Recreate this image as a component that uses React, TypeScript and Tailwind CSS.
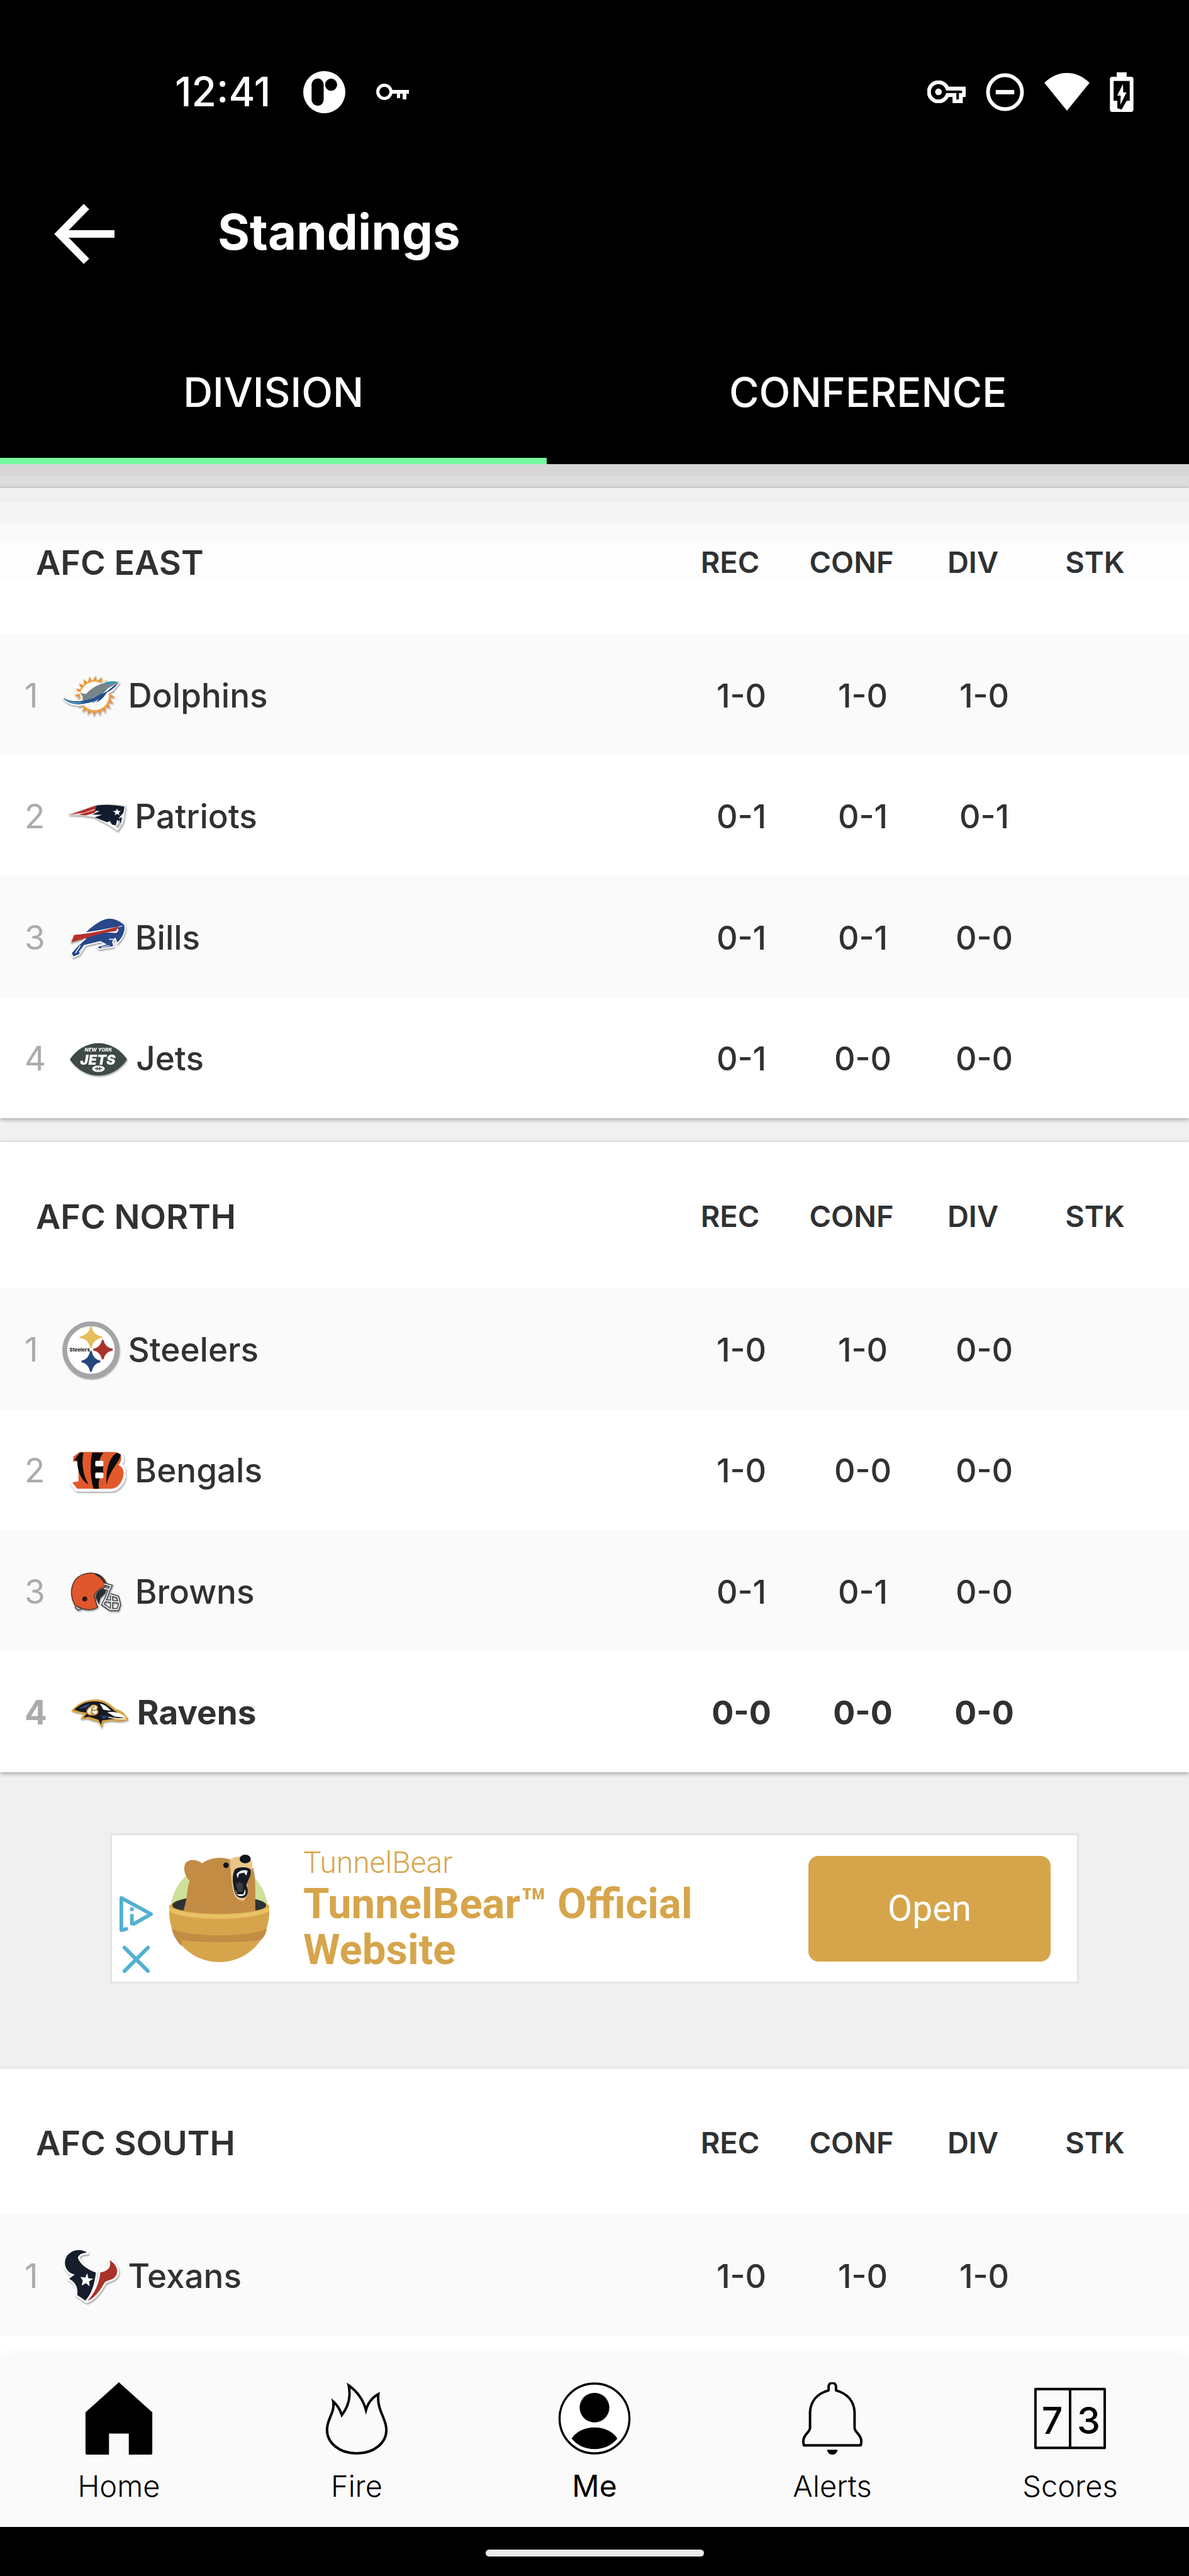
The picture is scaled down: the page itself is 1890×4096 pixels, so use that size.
import type { ReactNode } from "react";

type Team = { rank: number; name: string; logo: ReactNode; stats: string[]; bold?: boolean };
type Division = { title: string; teams: Team[] };

function Logo({ label, children }: { label: string; children: ReactNode }) {
  return (
    <svg
      viewBox="0 0 92 92"
      role="img"
      aria-label={label}
      className="h-[91px] w-[91px] shrink-0 drop-shadow-[1px_2px_1px_rgba(0,0,0,0.35)]"
    >
      {children}
    </svg>
  );
}

const rays = Array.from({ length: 20 }, (_, i) => {
  const at = (deg: number, r: number) => {
    const a = (deg * Math.PI) / 180;
    return `${(52 + r * Math.cos(a)).toFixed(1)} ${(46 + r * Math.sin(a)).toFixed(1)}`;
  };
  return `M${at(i * 18 - 6, 25)}L${at(i * 18 + 3, 32)}L${at(i * 18 + 6, 25)}Z`;
}).join("");

const dolphins = (
  <Logo label="Dolphins logo">
    <path d={rays} fill="#ee7d2b" stroke="#f6b765" strokeWidth="1" />
    <circle cx="52" cy="46" r="24" fill="#fff" stroke="#f0a445" strokeWidth="2.5" />
    <path d="M91 24C84 22 75 23 68 25C56 28 45 35 38 43L28 41C32 45 34 48 32 52C26 56 14 56 1 49C8 59 22 63 38 59C52 58 62 52 70 42C80 40 86 32 91 24Z" fill="#fff" stroke="#fff" strokeWidth="3" />
    <path d="M91 24C84 22 75 23 68 25C56 28 45 35 38 43L28 41C32 45 34 48 32 52C36 54 46 52 53 47L48 58C58 54 64 46 70 38C78 34 85 30 91 24Z" fill="#77858b" />
    <path d="M68 25C75 22 83 22 90 24L76 27Z" fill="#2d9ac2" />
    <path d="M1 49C12 55 24 56 34 53C48 52 62 44 72 36C64 48 52 57 38 58C22 62 8 58 1 49Z" fill="#26548f" />
    <path d="M90 26C84 33 77 38 71 41C67 49 61 53 55 57C59 49 64 41 72 35Z" fill="#1f4688" />
    <path d="M5 52C14 57 26 58 36 55C28 60 13 59 5 52Z" fill="#61b8d3" />
    <path d="M87 26L73 34L64 43L73 38Z" fill="#fff" />
  </Logo>
);

const patriots = (
  <Logo label="Patriots logo">
    <path d="M0 42L44 27C60 24 78 26 92 28L90 40L88 54L79 68L62 57L42 46L22 43Z" fill="#fff" stroke="#d5d5d5" strokeWidth="1.5" />
    <path d="M2 42L44 27L45 32L24 39Z" fill="#b5302f" />
    <path d="M16 42L46 33L42 39L28 43Z" fill="#b5302f" />
    <path d="M45 27C60 25 76 26 90 29L88 39L80 48L86 46L84 56L78 50L76 59L70 58L66 52L62 54L42 46L54 42L38 42L50 36L42 36Z" fill="#121b2b" />
    <path d="M78 32L79.5 36L84 36L80.5 39L82 43L78 40.500L74 43L75.500 39L71 36L76 36Z" fill="#fff" />
    <path d="M82 49L84 58L79 64L75 60L79 58Z" fill="#aeb4b8" />
  </Logo>
);

const bills = (
  <Logo label="Bills logo">
    <path d="M20 42C34 28 48 16 62 14C72 13 82 18 89 24C92 34 87 46 77 55L74 47L70 52L72 60L48 64L44 60L58 56L50 52C42 54 32 56 26 58L16 73L6 77L3 70L14 58L26 47Z" fill="#27478a" stroke="#fff" strokeWidth="2" />
    <path d="M1 54L8 39C30 37 56 32 86 26L76 38L54 37L28 45Z" fill="#fff" />
    <path d="M3 53L8 41C32 39 56 34 80 27L75 35L54 38L28 46Z" fill="#b7312c" />
    <path d="M78 29L86 27L79 34Z" fill="#27478a" />
    <path d="M18 58L10 70M25 57L16 69" stroke="#fff" strokeWidth="1.500" fill="none" />
    <path d="M52 61L65 58M64 48L74 48" stroke="#fff" strokeWidth="1.500" />
  </Logo>
);

const jets = (
  <Logo label="Jets logo">
    <path d="M0 46C12 28 30 20 46 20S80 28 92 46C80 64 62 72 46 72S12 64 0 46Z" fill="#3e4a45" />
    <g fill="#fff" fontFamily="Inter, sans-serif" fontStyle="italic" textAnchor="middle">
      <text x="46" y="33" fontSize="8" fontWeight="800">NEW YORK</text>
      <text x="45" y="55" fontSize="22" fontWeight="900">JETS</text>
    </g>
    <ellipse cx="46" cy="61" rx="11" ry="6" fill="#fff" stroke="#3e4a45" strokeWidth="1.500" />
    <path d="M40 61H52M44 58V64M48 58V64" stroke="#3e4a45" strokeWidth="1.500" />
  </Logo>
);

const steelers = (
  <Logo label="Steelers logo">
    <circle cx="46" cy="46" r="42" fill="#fff" stroke="#a3a5a7" strokeWidth="7.500" />
    <path d="M46 8Q48.500 23 64 25.500Q48.500 28 46 43Q43.500 28 28 25.500Q43.500 23 46 8Z" fill="#e7bd5c" stroke="#e7bd5c" strokeWidth="2" />
    <path d="M65 30Q67.500 43 81 45.500Q67.500 48 65 61Q62.500 48 50 45.500Q62.500 43 65 30Z" fill="#a83129" stroke="#a83129" strokeWidth="2.500" />
    <path d="M46 48Q48.500 62 61 64.500Q48.500 67 46 81Q43.500 67 31 64.500Q43.500 62 46 48Z" fill="#26467f" stroke="#26467f" strokeWidth="2.500" />
    <text x="28" y="49" fontSize="8" fontWeight="800" fontFamily="Inter, sans-serif" textAnchor="middle" fill="#222">Steelers</text>
  </Logo>
);

const bengalsB = "M8 22L18 15H72C86 15 88 28 80 36C91 40 90 54 84 64C80 70 75 74 68 74H14L6 64L16 62V30H7Z";
const bengals = (
  <Logo label="Bengals logo">
    <path d={bengalsB} fill="#fff" stroke="#fff" strokeWidth="9" strokeLinejoin="round" />
    <path d={bengalsB} fill="#e2582b" />
    <path d="M4 32H14V60L4 64Z" fill="#fff" />
    <path d="M9 28L18 16H24C20 34 24 54 32 67C20 60 14 46 14 29Z" fill="#0a0a0a" />
    <path d="M38 16H56C52 22 50 26 50 30H43V38H56C55 42 55 44 56 48H43V57H50C48 62 48 68 49 74H40C35 56 34 34 38 16Z" fill="#0a0a0a" />
    <path d="M84 19C82 32 68 40 61 67C60 46 64 24 78 16Z" fill="#0a0a0a" />
    <rect x="43" y="29" width="13" height="9" rx="2" fill="#fff" />
    <rect x="43" y="48" width="13" height="9" rx="2" fill="#fff" />
  </Logo>
);

const mask = "M56 33L67 36L64 42L56 40M64 42L60 54L54 66L66 74L78 74L81 66L78 54L66 50M58 60L80 62M68 52L68 73";
const browns = (
  <Logo label="Browns logo">
    <path d="M10 68C0 52 2 32 14 22C28 12 46 14 54 23C58 27 60 31 61 36C52 38 45 42 40 52C43 58 42 64 46 70C38 76 26 75 20 72Z" fill="#e1562c" stroke="#45332c" strokeWidth="1.500" />
    <path d="M42 17C50 20 55 26 58 34" stroke="#272b2e" strokeWidth="2.500" fill="none" />
    <path d="M42 54C44 45 50 40 60 39L58 48L50 56L48 66Z" fill="#2a2c31" />
    <circle cx="25" cy="57" r="4" fill="#2a1a14" />
    <path d="M9 70L14 75L20 73" stroke="#555" strokeWidth="2" fill="none" />
    <path d={mask} fill="none" stroke="#3e4245" strokeWidth="5" />
    <path d={mask} fill="none" stroke="#e9eaea" strokeWidth="2" />
  </Logo>
);

const ravens = (
  <Logo label="Ravens logo">
    <path d="M0 42C12 28 28 22 46 24C58 26 66 34 72 39C80 41 88 46 92 56C82 60 72 59 64 58L52 60L49 70L44 60L24 54L15 56L20 46L10 45Z" fill="#d9a240" />
    <path d="M5 40C16 29 30 25 44 27C56 28 64 37 70 42L88 52L66 55L50 57L48 64L44 56L28 51L20 53L26 45L14 43Z" fill="#17191d" />
    <path d="M28 38C24 42 25 46 30 48H38C44 46 44 42 40 40C44 36 42 32 34 33Z" fill="#fff" stroke="#d9a240" strokeWidth="2" />
    <path d="M34 36L32 46M35 36H38M34 41H39M33 46H37" stroke="#a87621" strokeWidth="2" />
    <path d="M46 30C54 32 60 36 64 42L52 40Z" fill="#fff" />
    <path d="M58 44C72 42 82 46 89 53L70 51Z" fill="#fff" />
    <path d="M60 52C70 54 80 55 88 55" stroke="#fff" strokeWidth="1.500" fill="none" />
    <path d="M12 39C22 32 28 31 32 30L24 37Z" fill="#2a4b8a" />
    <path d="M47 49L62 50L52 55Z" fill="#27406f" />
  </Logo>
);

const texansNavy = "M40 8C32 2 20 3 13 8C5 13 3 22 5 30C8 38 14 42 20 43L11 50C21 55 26 64 24 76L37 85C46 76 52 60 54 40C42 36 28 27 25 16C27 10 33 8 40 8Z";
const texansRed = "M76 20C89 28 92 40 84 48C80 52 72 52 68 56C62 66 54 80 40 86C52 74 60 56 61 40C72 38 80 32 76 20Z";
const texans = (
  <Logo label="Texans logo">
    <path d={texansNavy + texansRed} fill="#fff" stroke="#fff" strokeWidth="6" strokeLinejoin="round" />
    <path d={texansNavy} fill="#171d2b" />
    <path d={texansRed} fill="#ab322b" />
    <path d="M40 41L42 49L50 50L43 54L44 62L38 57L31 61L33 53L29 47L37 48Z" fill="#fff" />
  </Logo>
);

const east: Division = {
  title: "AFC EAST",
  teams: [
    { rank: 1, name: "Dolphins", logo: dolphins, stats: ["1-0", "1-0", "1-0"] },
    { rank: 2, name: "Patriots", logo: patriots, stats: ["0-1", "0-1", "0-1"] },
    { rank: 3, name: "Bills", logo: bills, stats: ["0-1", "0-1", "0-0"] },
    { rank: 4, name: "Jets", logo: jets, stats: ["0-1", "0-0", "0-0"] },
  ],
};
const north: Division = {
  title: "AFC NORTH",
  teams: [
    { rank: 1, name: "Steelers", logo: steelers, stats: ["1-0", "1-0", "0-0"] },
    { rank: 2, name: "Bengals", logo: bengals, stats: ["1-0", "0-0", "0-0"] },
    { rank: 3, name: "Browns", logo: browns, stats: ["0-1", "0-1", "0-0"] },
    { rank: 4, name: "Ravens", logo: ravens, stats: ["0-0", "0-0", "0-0"], bold: true },
  ],
};
const south: Division = {
  title: "AFC SOUTH",
  teams: [{ rank: 1, name: "Texans", logo: texans, stats: ["1-0", "1-0", "1-0"] }],
};

function DivisionTable({ division, shaded }: { division: Division; shaded?: boolean }) {
  return (
    <table className="w-full table-fixed border-collapse">
      <colgroup>
        <col />
        <col className="w-[193px]" />
        <col className="w-[193px]" />
        <col className="w-[193px]" />
        <col className="w-[229px]" />
      </colgroup>
      <thead>
        <tr
          className={
            shaded
              ? "h-[232px] bg-[linear-gradient(to_bottom,#f0f0f0_10%,#f5f5f5_10%_24%,#fafafa_24%_37%,#fdfdfd_37%_62%,#ffffff_62%)]"
              : "h-[232px] bg-white"
          }
        >
          <th scope="col" className="pt-1 pl-[57px] text-left text-[54px] font-semibold">{division.title}</th>
          <th scope="col" className="pt-1 pr-[36px] text-center text-[47px] font-semibold">REC</th>
          <th scope="col" className="pt-1 pr-[36px] text-center text-[47px] font-semibold">CONF</th>
          <th scope="col" className="pt-1 pr-[36px] text-center text-[47px] font-semibold">DIV</th>
          <th scope="col" className="pt-1 pr-[70px] text-center text-[47px] font-semibold">STK</th>
        </tr>
      </thead>
      <tbody>
        {division.teams.map((t) => (
          <tr
            key={t.name}
            className={
              "odd:h-[193px] odd:bg-[#fafafa] even:h-[192px] even:bg-white " + (t.bold ? "font-bold" : "font-medium")
            }
          >
            <td className="pt-1 pl-[39px]">
              <div className="flex items-center text-[53px]">
                <span className={t.bold ? "text-[#a9abac]" : "font-normal text-[#a9abac]"}>{t.rank}</span>
                <span className="ml-[38px] flex">{t.logo}</span>
                <span className="ml-[14px]">{t.name}</span>
              </div>
            </td>
            {t.stats.map((s, i) => (
              <td key={i} className="pt-1 text-center text-[52px]">{s}</td>
            ))}
            <td />
          </tr>
        ))}
      </tbody>
    </table>
  );
}

function StatusBar() {
  return (
    <div className="flex h-[228px] items-center pt-16 pr-[88px] pl-[278px]">
      <span className="text-[64px] leading-[64px] font-medium">12:41</span>
      <svg viewBox="0 0 68 68" className="ml-[52px] h-[67px] w-[67px]" aria-hidden="true">
        <circle cx="34" cy="34" r="34" fill="#fff" />
        <rect x="13.500" y="12" width="19.500" height="44" rx="9.750" fill="#000" />
        <circle cx="45" cy="22" r="9.750" fill="#000" />
      </svg>
      <svg viewBox="0 0 52 26" className="ml-[49px] h-[26px] w-[52px]" aria-label="VPN" role="img">
        <circle cx="13" cy="13" r="10.500" fill="none" stroke="#fff" strokeWidth="5" />
        <path d="M24 10H52V16H48V25H42V16H38V23H33V16H24Z" fill="#fff" />
      </svg>
      <div className="ml-auto flex items-center gap-[32px]">
        <svg viewBox="0 5 24 14" className="h-[36px] w-[61px]" fill="#fff" aria-hidden="true">
          <path d="M22 19h-6v-4h-2.680c-1.140 2.420-3.600 4-6.320 4-3.860 0-7-3.140-7-7s3.140-7 7-7c2.720 0 5.170 1.580 6.320 4H24v6h-2v4zm-4-2h2v-4h2v-2H11.940l-.230-.670C11.010 8.340 9.110 7 7 7c-2.760 0-5 2.240-5 5s2.240 5 5 5c2.110 0 4.010-1.340 4.710-3.330l.230-.670H18v4z" stroke="#fff" strokeWidth="0.400" />
          <circle cx="7" cy="12" r="2.100" />
        </svg>
        <svg viewBox="0 0 62 62" className="h-[61px] w-[61px]" aria-hidden="true">
          <circle cx="31" cy="31" r="27.500" fill="none" stroke="#fff" strokeWidth="6" />
          <rect x="16" y="27.500" width="30" height="7" fill="#fff" />
        </svg>
        <svg viewBox="0 0 73 61" className="h-[60px] w-[72px]" aria-hidden="true">
          <path d="M0 16C10 6 22 0 36.500 0S63 6 73 16L36.500 61Z" fill="#fff" />
        </svg>
        <svg viewBox="0 0 38 64" className="h-[63px] w-[38px]" aria-hidden="true">
          <path d="M11 0H27V7H34Q38 7 38 11V60Q38 64 34 64H4Q0 64 0 60V11Q0 7 4 7H11Z" fill="#fff" />
          <path d="M6 14H32V46H27L19 60L12 58V46H6Z" fill="#000" />
          <path d="M21.500 17L11 38H17L16 55L27.500 32H22Z" fill="#fff" stroke="#000" strokeWidth="1" />
        </svg>
      </div>
    </div>
  );
}

function AdBanner() {
  return (
    <aside className="bg-[#f0f0f0] px-[175px] pt-[97px] pb-[135px]" aria-label="Advertisement">
      <div className="flex h-[239px] items-center border-[3px] border-[#e4e4e4] bg-white pr-[42px] pl-[11px] font-['Roboto'] text-[#d6a54b]">
        <div className="flex flex-col items-center gap-5 self-end pb-[13px]">
          <button type="button" aria-label="Ad choices">
            <svg viewBox="0 0 56 60" className="h-[59px] w-[55px]" fill="none" stroke="#53b0d0" strokeWidth="6" strokeLinejoin="round" strokeLinecap="round">
              <path d="M12 54L4 56V4L52 30L24 46" />
              <path d="M21 30V48" strokeLinecap="butt" />
              <circle cx="21" cy="22" r="1.500" strokeWidth="3.500" />
            </svg>
          </button>
          <button type="button" aria-label="Close ad">
            <svg viewBox="0 0 46 46" className="h-[45px] w-[45px]" fill="none" stroke="#53b0d0" strokeWidth="6" strokeLinecap="round">
              <path d="M4 4L42 42M42 4L4 42" />
            </svg>
          </button>
        </div>
        <svg viewBox="0 0 162 174" className="ml-[25px] h-[171px] w-[159px]" role="img" aria-label="TunnelBear logo">
          <circle cx="81" cy="92" r="79" fill="#cfe09b" />
          <path d="M0 84C6 62 156 62 162 84V96H0Z" fill="#e0b052" />
          <ellipse cx="81" cy="82" rx="76" ry="16" fill="#2f3234" />
          <path d="M20 98C30 76 28 56 33 42C24 34 22 20 27 13C33 6 46 8 53 14C68 4 84 3 100 8L136 22C142 44 138 70 140 98Z" fill="#c28c45" />
          <path d="M98 8C106 2 128 0 134 10C136 22 132 34 126 44C128 58 126 70 120 75C112 74 106 70 104 60C100 44 100 28 98 8Z" fill="#ebc686" />
          <path d="M106 24C114 18 128 20 132 24C134 34 126 42 125 50C130 60 126 70 118 70C108 70 106 62 104 50C102 40 103 30 106 24Z" fill="#151a24" />
          <path d="M109 32C113 25 122 24 127 26L125 34L121 29L113 31L111 38Z" fill="#fff" />
          <path d="M107 56L110 64H120L123 56C125 64 122 67 116 67C110 67 108 64 107 56Z" fill="#fff" />
          <path d="M108 48C112 42 118 44 120 50L119 60H111Z" fill="#3a3d3f" />
          <ellipse cx="123" cy="7" rx="9" ry="7" fill="#11151f" />
          <circle cx="92" cy="17" r="4.500" fill="#11151f" />
          <path d="M0 82C20 100 142 100 162 82V93C162 138 126 174 81 174S0 138 0 93Z" fill="#d6a54b" />
          <path d="M0 84C20 101 142 101 162 84V91C136 108 26 108 0 91Z" fill="#e9c266" />
          <path d="M4 120C34 134 128 134 158 120C157 128 152 136 148 138C124 143 40 143 20 138V148C12 140 6 130 4 120Z" fill="#c28c45" />
        </svg>
        <a href="#tunnelbear" className="ml-[54px] flex-1">
          <span className="block text-[48px] leading-[58px] font-light">TunnelBear</span>
          <span className="block text-[67px] leading-[73px] font-bold">TunnelBear™ Official Website</span>
        </a>
        <button type="button" className="h-[168px] w-[385px] rounded-2xl bg-[#d6a54b] text-[57px] text-white">
          Open
        </button>
      </div>
    </aside>
  );
}

const navItems: { label: string; icon: ReactNode; active?: boolean }[] = [
  {
    label: "Home",
    icon: <path d="M60 0L114 48.500V115Q114 117 112 117H76V83H44V117H8Q6 117 6 115V48.500Z" fill="#000" />,
  },
  {
    label: "Fire",
    icon: (
      <path
        d="M47 5C51 24 46 40 36 53C33 44 29 37 22 31C25 50 12 58 12 77C12 98 32 115 60 115S108 98 108 77C108 58 92 45 95 19C84 25 78 34 75 45C71 30 61 15 47 5Z"
        fill="none"
        stroke="#000"
        strokeWidth="4"
      />
    ),
  },
  {
    label: "Me",
    active: true,
    icon: (
      <>
        <circle cx="60" cy="58.500" r="56.500" fill="#fff" stroke="#000" strokeWidth="3.500" />
        <circle cx="60" cy="41" r="24" fill="#000" />
        <path d="M23 91C30 80 44 73 60 73S90 80 97 91C88 102 75 108 60 108S32 102 23 91Z" fill="#000" />
      </>
    ),
  },
  {
    label: "Alerts",
    icon: (
      <>
        <path
          d="M54 13V7A6 6 0 0 1 66 7V13C84 18 95 30 96 48V74C97 82 107 84 107 96L106 102H14L13 96C13 84 23 82 24 74V48C25 30 36 18 54 13Z"
          fill="none"
          stroke="#000"
          strokeWidth="4"
          strokeLinejoin="round"
        />
        <path d="M51.500 109H68.500C68 114 64 117 60 117S52 114 51.500 109Z" fill="#000" />
      </>
    ),
  },
  {
    label: "Scores",
    icon: (
      <>
        <path d="M4 11H116V106H4ZM60 11V106" fill="none" stroke="#000" strokeWidth="4" strokeLinejoin="round" />
        <g fontFamily="Inter, sans-serif" fontSize="60" fontWeight="500" textAnchor="middle" fill="#000">
          <text x="31" y="83">7</text>
          <text x="90" y="83">3</text>
        </g>
      </>
    ),
  },
];

export default function App() {
  return (
    <div className="flex h-screen flex-col overflow-hidden bg-[#f0f0f0] font-['Inter',sans-serif] text-[#2f3132]">
      <header className="shrink-0 bg-black text-white">
        <StatusBar />
        <div className="flex h-[288px] items-center pl-[86px]">
          <button type="button" aria-label="Back">
            <svg viewBox="0 0 98 98" className="h-[96px] w-[96px]" fill="none" stroke="#fff" strokeWidth="12.500">
              <path d="M52.500 4.500L9 49L52.500 93.500M10 49H98" />
            </svg>
          </button>
          <h1 className="ml-[164px] pb-2 text-[78px] font-bold">Standings</h1>
        </div>
        <div role="tablist" className="flex h-[222px] text-[65px] font-medium">
          <button type="button" role="tab" aria-selected="true" className="w-[46%] border-b-[10px] border-[#75fa9d] pt-1">
            DIVISION
          </button>
          <button type="button" role="tab" aria-selected="false" className="flex-1 border-b-[10px] border-black pt-1">
            CONFERENCE
          </button>
        </div>
      </header>

      <main className="flex min-h-0 flex-1 flex-col overflow-hidden">
        <div className="h-[38px] shrink-0 border-b-2 border-[#d6d6d6] bg-[linear-gradient(to_bottom,#d6d6d6_50%,#dcdcdc_50%)]" />
        <section className="relative shrink-0 bg-white shadow-[0_2px_7px_rgba(0,0,0,0.35)]">
          <DivisionTable division={east} shaded />
        </section>
        <section className="relative mt-[38px] shrink-0 bg-white shadow-[0_2px_7px_rgba(0,0,0,0.35)]">
          <DivisionTable division={north} />
        </section>
        <div className="shrink-0">
          <AdBanner />
        </div>
        <section className="flex-1 bg-white shadow-[0_-1px_3px_rgba(0,0,0,0.1)]">
          <DivisionTable division={south} />
        </section>
      </main>

      <nav className="relative shrink-0 bg-[#fafafa] shadow-[0_-2px_24px_rgba(0,0,0,0.05)]">
        <ul className="grid h-[269px] grid-cols-5 pt-[39px]">
          {navItems.map((n) => (
            <li key={n.label}>
              <a href={"#" + n.label.toLowerCase()} className="flex flex-col items-center gap-5 text-black">
                <svg viewBox="0 0 120 118" className="h-[116px] w-[118px]" aria-hidden="true">{n.icon}</svg>
                <span className={n.active ? "text-[48px] leading-[58px]" : "text-[47px] leading-[58px] font-light"}>
                  {n.label}
                </span>
              </a>
            </li>
          ))}
        </ul>
      </nav>
      <footer className="flex h-[78px] shrink-0 items-center justify-center bg-black pt-1">
        <div className="h-[11px] w-[347px] rounded-full bg-[#ebebeb]" />
      </footer>
    </div>
  );
}
